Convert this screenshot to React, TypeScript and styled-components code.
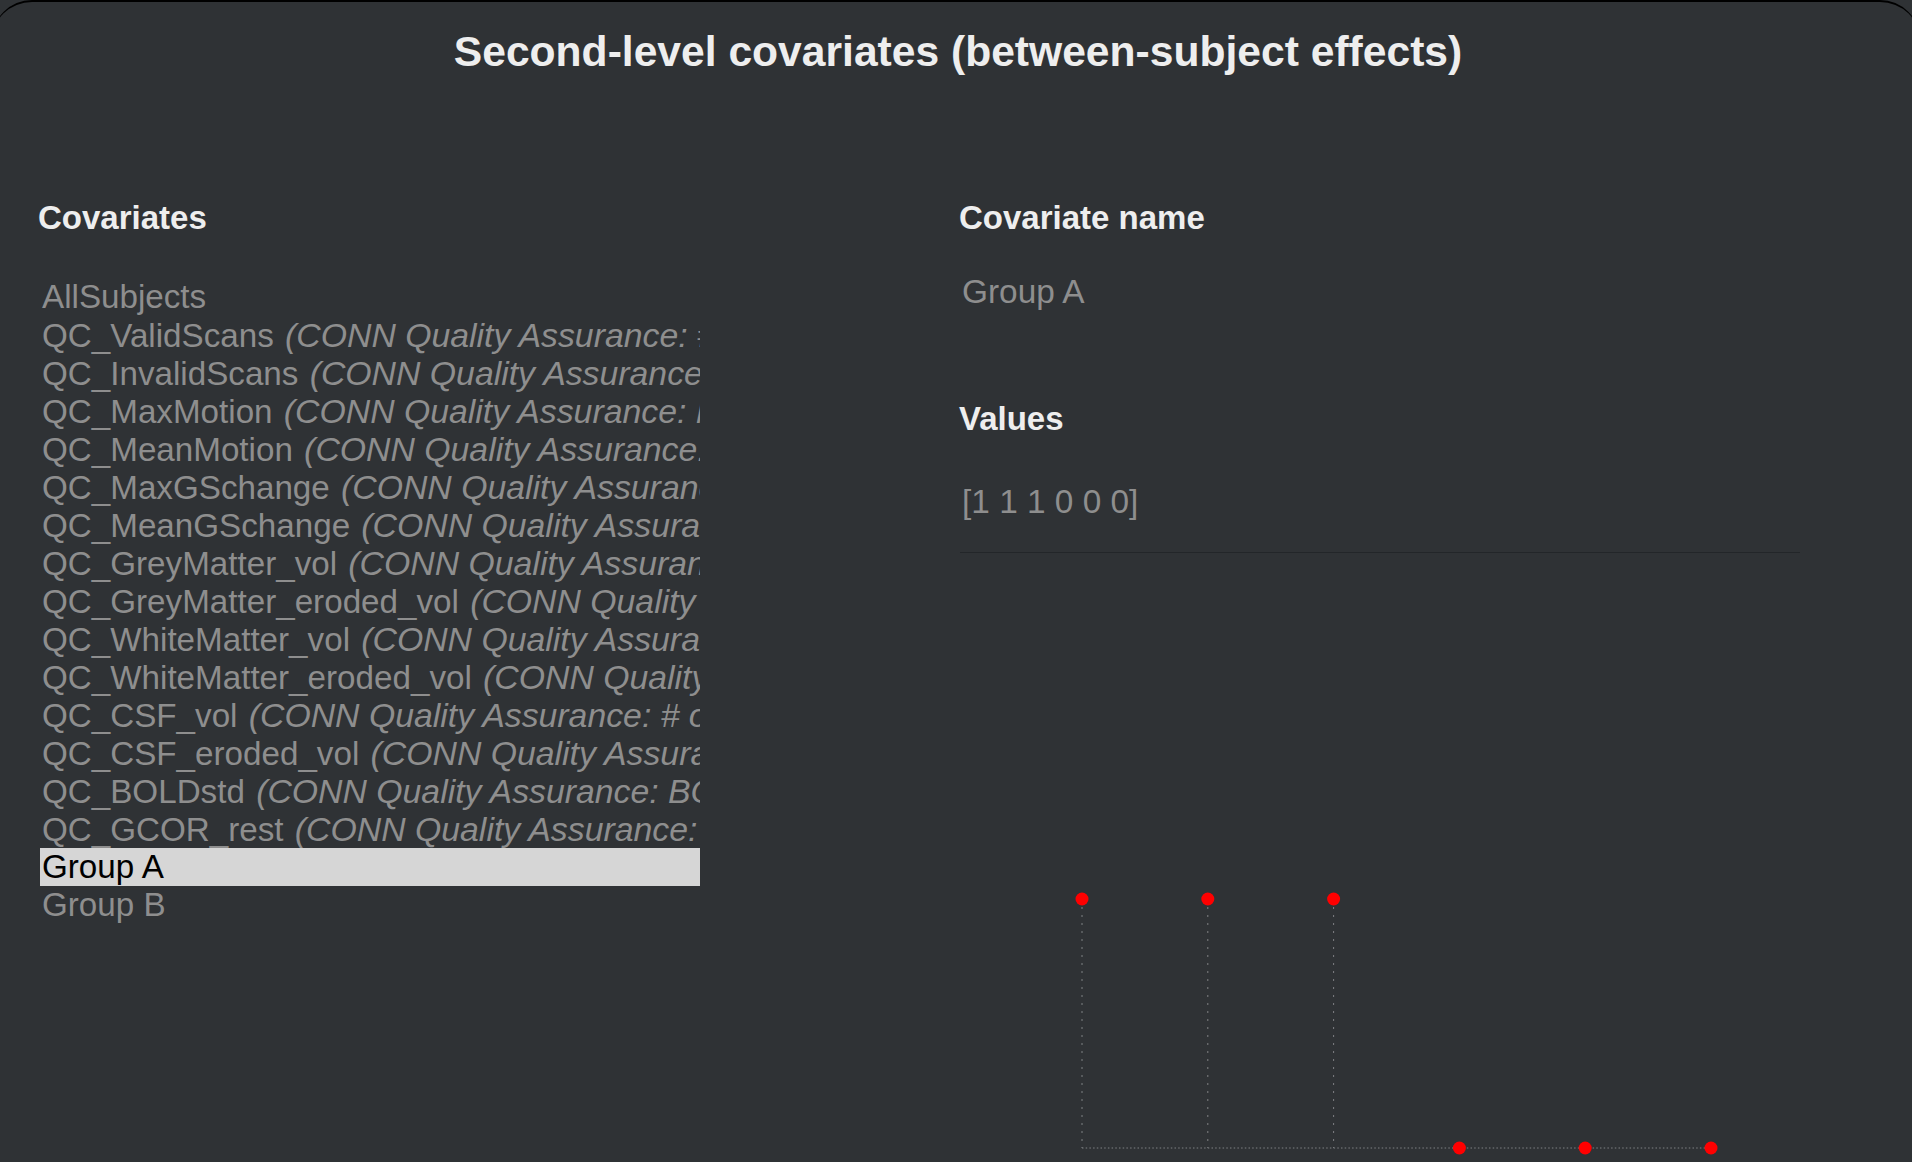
import React, { useState } from 'react'
import styled, { createGlobalStyle } from 'styled-components'

const covariates = [
  { name: 'AllSubjects', desc: '' },
  { name: 'QC_ValidScans', desc: 'CONN Quality Assurance: # of valid scans' },
  { name: 'QC_InvalidScans', desc: 'CONN Quality Assurance: # of outlier scans' },
  { name: 'QC_MaxMotion', desc: 'CONN Quality Assurance: Maximum motion' },
  { name: 'QC_MeanMotion', desc: 'CONN Quality Assurance: Mean motion' },
  { name: 'QC_MaxGSchange', desc: 'CONN Quality Assurance: Maximum global-signal change' },
  { name: 'QC_MeanGSchange', desc: 'CONN Quality Assurance: Mean global-signal change' },
  { name: 'QC_GreyMatter_vol', desc: 'CONN Quality Assurance: # of voxels in Grey Matter' },
  { name: 'QC_GreyMatter_eroded_vol', desc: 'CONN Quality Assurance: # of voxels in eroded Grey Matter' },
  { name: 'QC_WhiteMatter_vol', desc: 'CONN Quality Assurance: # of voxels in White Matter' },
  { name: 'QC_WhiteMatter_eroded_vol', desc: 'CONN Quality Assurance: # of voxels in eroded White Matter' },
  { name: 'QC_CSF_vol', desc: 'CONN Quality Assurance: # of voxels in CSF' },
  { name: 'QC_CSF_eroded_vol', desc: 'CONN Quality Assurance: # of voxels in eroded CSF' },
  { name: 'QC_BOLDstd', desc: 'CONN Quality Assurance: BOLD signal standard deviation' },
  { name: 'QC_GCOR_rest', desc: 'CONN Quality Assurance: Global Correlation in rest' },
  { name: 'Group A', desc: '' },
  { name: 'Group B', desc: '' },
]

const groupValues: Record<string, number[]> = {
  'Group A': [1, 1, 1, 0, 0, 0],
  'Group B': [0, 0, 0, 1, 1, 1],
}

const GlobalStyle = createGlobalStyle`
  html, body {
    margin: 0;
    background: #2f3235;
    overflow: hidden;
  }
  body {
    font-family: 'Liberation Sans', Arial, sans-serif;
  }
`

const Window = styled.div`
  margin: 0 -8px;
  min-height: 1162px;
  box-sizing: border-box;
  padding: 25px 8px 0;
  background: #2f3235;
  border-top: 2px solid #000;
  border-radius: 40px 40px 0 0;
`

const Title = styled.h1`
  margin: 0 0 0 4px;
  font-size: 42.6px;
  line-height: 48px;
  font-weight: 700;
  text-align: center;
  color: #eeeeee;
`

const Columns = styled.div`
  display: grid;
  grid-template-columns: 662px 840px;
  column-gap: 259px;
  margin-top: 124px;
  padding-left: 38px;
`

const Column = styled.section`
  display: flex;
  flex-direction: column;
`

const Heading = styled.h2<{ $gap?: number }>`
  margin: ${p => p.$gap ?? 0}px 0 0;
  font-size: 33px;
  line-height: 38px;
  font-weight: 700;
  color: #eeeeee;
`

const List = styled.ul`
  list-style: none;
  margin: 41px 0 0 2px;
  padding: 0;
  width: 660px;
`

const Item = styled.li<{ $selected: boolean }>`
  height: 38px;
  line-height: 38px;
  font-size: 33.2px;
  padding-left: 2px;
  white-space: nowrap;
  overflow: hidden;
  cursor: default;
  color: ${p => (p.$selected ? '#000' : '#8e8e8e')};
  background: ${p => (p.$selected ? '#d6d6d6' : 'transparent')};
  em {
    font-style: italic;
    font-size: 33.8px;
    margin-left: 2px;
  }
`

const Field = styled.div<{ $gap: number }>`
  margin-top: ${p => p.$gap}px;
  padding-left: 3px;
  font-size: 33.4px;
  line-height: 38px;
  color: #8e8e8e;
`

const Divider = styled.hr`
  margin: 31px 0 0 1px;
  width: 840px;
  height: 0;
  border: 0;
  border-top: 1px solid #232629;
`

const ChartBox = styled.div`
  height: 609px;
  svg {
    display: block;
  }
`

const StemPlot = ({ values }: { values: number[] }) => {
  const x0 = 123
  const step = 125.8
  const yHigh = 346
  const yLow = 595
  const xs = values.map((_, i) => x0 + i * step)
  const ys = values.map(v => (v ? yHigh : yLow))
  return (
    <svg width={840} height={609} viewBox='0 0 840 609'>
      <line
        x1={xs[0]}
        x2={xs[xs.length - 1]}
        y1={yLow}
        y2={yLow}
        stroke='#7f8184'
        strokeWidth={1}
        strokeDasharray='1.5 2.2'
      />
      {xs.map((x, i) =>
        ys[i] !== yLow ? (
          <line
            key={'s' + i}
            x1={x}
            x2={x}
            y1={ys[i]}
            y2={yLow}
            stroke='#7f8184'
            strokeWidth={1}
            strokeDasharray='2 6'
          />
        ) : null
      )}
      {xs.map((x, i) => (
        <circle key={'d' + i} cx={x} cy={ys[i]} r={6.5} fill='#ff0000' />
      ))}
    </svg>
  )
}

const App = () => {
  const [selected, setSelected] = useState('Group A')
  const values = groupValues[selected] ?? [1, 1, 1, 1, 1, 1]

  return (
    <>
      <GlobalStyle />
      <Window>
        <Title>Second-level covariates (between-subject effects)</Title>
        <Columns>
          <Column>
            <Heading>Covariates</Heading>
            <List>
              {covariates.map(c => (
                <Item
                  key={c.name}
                  $selected={c.name === selected}
                  onClick={() => setSelected(c.name)}>
                  {c.name}
                  {c.desc && (
                    <>
                      {' '}
                      <em>({c.desc})</em>
                    </>
                  )}
                </Item>
              ))}
            </List>
          </Column>
          <Column>
            <Heading>Covariate name</Heading>
            <Field $gap={36}>{selected}</Field>
            <Heading $gap={89}>Values</Heading>
            <Field $gap={45}>[{values.join(' ')}]</Field>
            <Divider />
            <ChartBox>
              <StemPlot values={values} />
            </ChartBox>
          </Column>
        </Columns>
      </Window>
    </>
  )
}

export default App
